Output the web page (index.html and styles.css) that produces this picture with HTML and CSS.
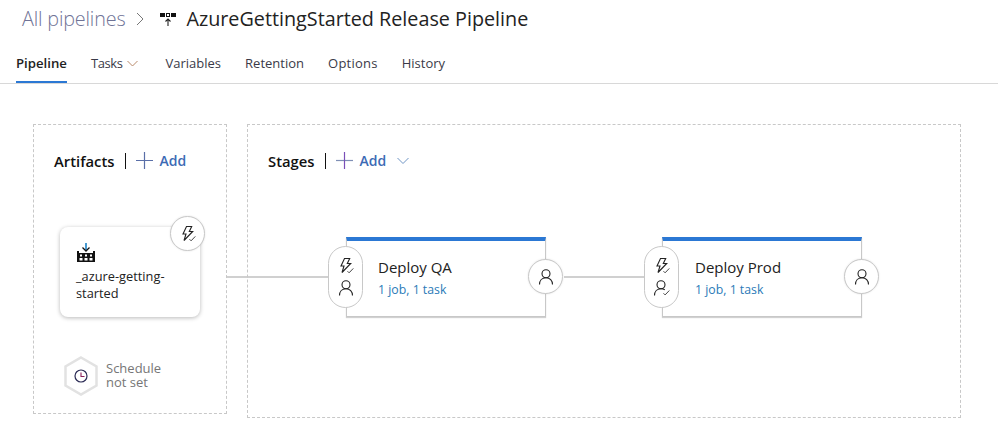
FILE: index.html
```html
<!DOCTYPE html>
<html>
<head>
<title>AzureGettingStarted Release Pipeline</title>
<link rel="stylesheet" href="styles.css">
</head>
<body>

<svg class="defs" width="0" height="0">
  <symbol id="bolt" viewBox="0 0 18 18">
    <path d="M7.500 1.500h5.200L10.300 6.500h3.400L5 15.500l2-6.500H4z" fill="none" stroke="#222" stroke-width="1.100" stroke-linejoin="miter"/>
    <path d="M10.500 14.200l1.600 1.600 4.200-4.400" fill="none" stroke="#444" stroke-width="1"/>
  </symbol>
  <symbol id="person" viewBox="0 0 18 18">
    <circle cx="9" cy="5.800" r="4" fill="none" stroke="#222" stroke-width="1.100"/>
    <path d="M2.500 16.500c0-4 2.600-6.800 6.500-6.800s6.500 2.800 6.500 6.800" fill="none" stroke="#222" stroke-width="1.100"/>
  </symbol>
  <symbol id="person-ok" viewBox="0 0 18 18">
    <circle cx="8" cy="5.800" r="4" fill="none" stroke="#222" stroke-width="1.100"/>
    <path d="M1.500 16.500c0-4 2.600-6.800 6.500-6.800 1.500 0 2.800.4 3.800 1.100" fill="none" stroke="#222" stroke-width="1.100"/>
    <path d="M10.500 14.300l1.600 1.600 4.200-4.400" fill="none" stroke="#444" stroke-width="1"/>
  </symbol>
</svg>

<div class="title-bar">
  <a class="crumb">All pipelines</a>
  <svg class="crumb-sep" width="8" height="14" viewBox="0 0 8 14"><path d="M1 1l6 6-6 6" fill="none" stroke="#777" stroke-width="1"/></svg>
  <svg class="pipeline-icon" width="16" height="16" viewBox="0 0 16 16">
    <path d="M0 2h5v4H0zM11 2h5v4h-5zM6 2h4v4H6z" fill="#111"/>
    <path d="M7 3h2v2H7z" fill="#fff"/>
    <path d="M8 15V8M5.500 10.500L8 8l2.500 2.500" fill="none" stroke="#222" stroke-width="1.100"/>
  </svg>
  <h1>AzureGettingStarted Release Pipeline</h1>
</div>

<div class="tabs">
  <a class="tab active">Pipeline</a>
  <a class="tab has-menu"><span class="tab-label">Tasks</span>
    <svg width="11" height="7" viewBox="0 0 11 7"><path d="M.5 1l5 5 5-5" fill="none" stroke="#b98a6a" stroke-width="1"/></svg>
  </a>
  <a class="tab">Variables</a>
  <a class="tab">Retention</a>
  <a class="tab wide">Options</a>
  <a class="tab">History</a>
</div>

<div class="canvas">
  <div class="link link-artifact"></div>
  <div class="link link-stage"></div>

  <div class="panel artifacts">
    <div class="panel-head">
      <span class="panel-title">Artifacts</span>
      <span class="panel-add">
        <svg width="17" height="17" viewBox="0 0 17 17"><path d="M8.500 0v17M0 8.500h17" stroke="#5a6fa8" stroke-width="1.200"/></svg>
        Add
      </span>
    </div>

    <div class="artifact">
      <svg class="factory" width="18" height="19" viewBox="0 0 18 19">
        <path d="M9 0v7" stroke="#0a78c2" stroke-width="1.500"/>
        <path d="M5.500 4.500L9 8l3.500-3.500" fill="none" stroke="#111" stroke-width="1.300"/>
        <path d="M0 8h2v2h14V8h2v11H0z" fill="#111"/>
        <path d="M3 11.500h2v2H3zM8 11.500h2v2H8zM13 11.500h2v2h-2z" fill="#fff"/>
        <path d="M2.500 15h3v2.500h-3zM7.500 15h3v2.500h-3zM12.500 15h3v2.500h-3z" fill="#fff"/>
      </svg>
      <div class="artifact-name">_azure-getting-started</div>
      <span class="round-btn artifact-trigger"><svg width="18" height="18"><use href="#bolt"/></svg></span>
    </div>

    <div class="schedule">
      <svg width="34" height="40" viewBox="0 0 34 40">
        <path d="M17 1.500L32.500 10.500v19L17 38.500 1.500 29.500v-19z" fill="#fff" stroke="#e2e2e2" stroke-width="2.500"/>
        <circle cx="17" cy="20" r="6" fill="none" stroke="#2b2b55" stroke-width="1.200"/>
        <path d="M17 16.500V20.500h3.500" fill="none" stroke="#8a1f5a" stroke-width="1.100"/>
      </svg>
      <span class="schedule-text">Schedule<br>not set</span>
    </div>
  </div>

  <div class="panel stages">
    <div class="panel-head">
      <span class="panel-title">Stages</span>
      <span class="panel-add">
        <svg width="17" height="17" viewBox="0 0 17 17"><path d="M0 8.500h17" stroke="#7f8fb5" stroke-width="1.200"/><path d="M8.500 0v17" stroke="#7a4fb8" stroke-width="1.200"/></svg>
        Add
        <svg class="add-chevron" width="12" height="7" viewBox="0 0 12 7"><path d="M.5 1l5.500 5.500L11.500 1" fill="none" stroke="#6f94c4" stroke-width="1"/></svg>
      </span>
    </div>

    <div class="stage stage-qa">
      <div class="stage-name">Deploy QA</div>
      <div class="stage-info">1 job, 1 task</div>
      <div class="pill">
        <svg width="18" height="18"><use href="#bolt"/></svg>
        <svg width="18" height="18"><use href="#person"/></svg>
      </div>
      <span class="round-btn stage-after"><svg width="18" height="18"><use href="#person"/></svg></span>
    </div>

    <div class="stage stage-prod">
      <div class="stage-name">Deploy Prod</div>
      <div class="stage-info">1 job, 1 task</div>
      <div class="pill">
        <svg width="18" height="18"><use href="#bolt"/></svg>
        <svg width="18" height="18"><use href="#person-ok"/></svg>
      </div>
      <span class="round-btn stage-after"><svg width="18" height="18"><use href="#person"/></svg></span>
    </div>
  </div>
</div>

</body>
</html>
```

FILE: styles.css
```css
body {
  font-family: "Open Sans", "Noto Sans", sans-serif;
  margin: 0;
  background: #fff;
  color: #222;
  overflow: hidden;
}

.defs {
  position: absolute;
}

.title-bar {
  display: flex;
  align-items: center;
  height: 37px;
  padding-left: 22px;
}

.crumb {
  font-size: 19.75px;
  font-weight: 300;
  color: #6f7396;
  letter-spacing: -0.15px;
}

.crumb-sep {
  margin-left: 11px;
}

.pipeline-icon {
  margin-left: 16px;
}

.title-bar h1 {
  font-size: 19.75px;
  font-weight: 400;
  margin: 0 0 0 10px;
}

.tabs {
  display: flex;
  gap: 24px;
  height: 46px;
  padding-left: 16px;
  border-bottom: 1px solid #d8d8d8;
}

.tab {
  font-size: 13px;
  line-height: 52px;
  height: 46px;
  color: #3a3a48;
  box-sizing: border-box;
}

.tab.active {
  font-size: 13.2px;
  font-weight: 600;
  color: #222;
  border-bottom: 2px solid #2b78d4;
}

.tab.wide {
  letter-spacing: 0.25px;
}

.tab.has-menu {
  display: flex;
  gap: 4px;
  align-items: center;
  margin-right: 4px;
  padding-top: 6px;
  line-height: 18px;
}

.tab-label {
  letter-spacing: -0.4px;
}

.canvas {
  position: relative;
  display: flex;
  align-items: flex-start;
  gap: 20px;
  padding: 40px 0 0 33px;
}

.panel {
  position: relative;
  border: 1px dashed #c8c8c8;
  box-sizing: border-box;
}

.artifacts {
  width: 194px;
  height: 290px;
}

.stages {
  width: 714px;
  height: 294px;
}

.panel-head {
  display: flex;
  align-items: center;
  height: 20px;
  margin: 26px 0 0 20px;
}

.panel-title {
  font-size: 14.8px;
  font-weight: 600;
  color: #111;
  padding-right: 10px;
  border-right: 1px solid #111;
  line-height: 16px;
}

.panel-add {
  display: flex;
  align-items: center;
  gap: 7px;
  margin: -1px 0 0 10px;
  font-size: 14px;
  font-weight: 600;
  color: #3c6bb5;
}

.add-chevron {
  margin-left: 4px;
}

/* diagram nodes, placed on the canvas */
.link {
  position: absolute;
  height: 2px;
  background: #d0d0d0;
  top: 192px;
}

.link-artifact {
  left: 227px;
  width: 103px;
}

.link-stage {
  left: 564px;
  width: 80px;
}

.artifact {
  position: absolute;
  left: 26px;
  top: 102px;
  width: 140px;
  height: 90px;
  box-sizing: border-box;
  padding: 16px 16px 0;
  background: #fff;
  border-radius: 8px;
  box-shadow: 0 1px 4px rgba(0, 0, 0, 0.28);
}

.factory {
  display: block;
  margin-left: 1px;
}

.artifact-name {
  font-size: 12.8px;
  line-height: 17px;
  margin-top: 6px;
  color: #222;
  width: 96px;
}

.round-btn {
  position: absolute;
  display: flex;
  align-items: center;
  justify-content: center;
  width: 35px;
  height: 35px;
  box-sizing: border-box;
  background: #fff;
  border: 1px solid #c8c8c8;
  border-radius: 50%;
  box-shadow: 0 0 2px rgba(0, 0, 0, 0.12);
}

.artifact-trigger {
  right: -5px;
  top: -11px;
}

.schedule {
  position: absolute;
  left: 30px;
  top: 231px;
  display: flex;
  align-items: center;
  gap: 8px;
}

.schedule-text {
  font-size: 13px;
  line-height: 14px;
  padding-bottom: 2px;
  color: #767676;
}

.stage {
  position: absolute;
  top: 112px;
  width: 200px;
  height: 80px;
  box-sizing: border-box;
  padding: 16px 0 0 32px;
  background: #fff;
  border: 1px solid #c8c8c8;
  border-top: 4px solid #2b78d4;
  box-shadow: 0 1px 1px rgba(0, 0, 0, 0.18);
}

.stage-qa {
  left: 98px;
  padding-left: 31px;
}

.stage-prod {
  left: 414px;
}

.stage-name {
  font-size: 15px;
  line-height: 20px;
  color: #222;
}

.stage-info {
  font-size: 12.3px;
  line-height: 18px;
  margin-top: 4px;
  color: #2a7ab8;
}

.pill {
  position: absolute;
  left: -19px;
  top: 5px;
  display: flex;
  flex-direction: column;
  align-items: center;
  justify-content: center;
  gap: 4px;
  width: 35px;
  height: 62px;
  box-sizing: border-box;
  background: #fff;
  border: 1px solid #c8c8c8;
  border-radius: 18px;
}

.stage-after {
  right: -18px;
  top: 18px;
}
```
